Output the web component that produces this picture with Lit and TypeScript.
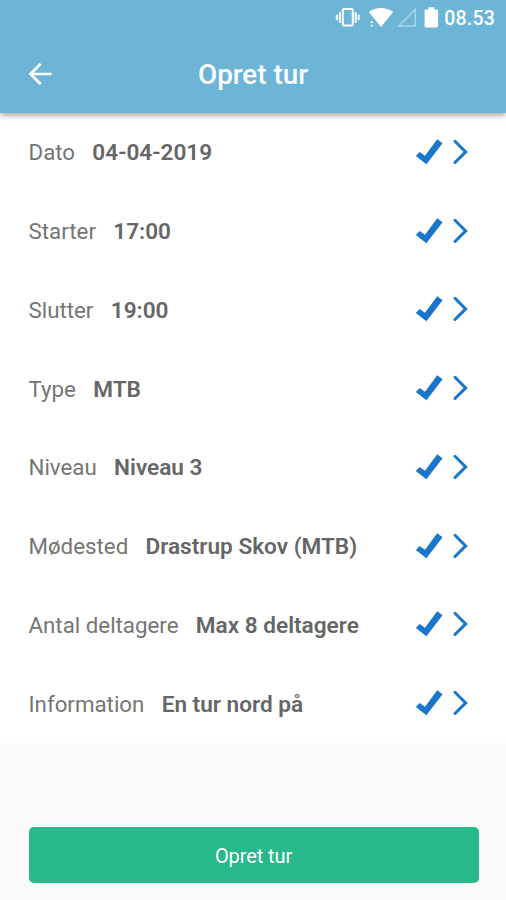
import { LitElement, html, css } from "lit";
import { customElement, property } from "lit/decorators.js";

@customElement("status-bar")
class StatusBar extends LitElement {
  static styles = css`
    :host { display: flex; height: 36px; box-sizing: border-box; justify-content: flex-end; align-items: center; gap: 4px; padding-right: 11px; color: #fff; }
    .icons { display: block; width: 106px; height: 36px; }
    .time { font-size: 19.5px; font-weight: 500; letter-spacing: 0.2px; line-height: 36px; padding-top: 1px; white-space: nowrap; }
  `;
  render() {
    return html`
      <svg class="icons" viewBox="335 0 106 36" fill="#fff">
        <rect x="343.8" y="9" width="10" height="16.5" rx="1.2" fill="none" stroke="#fff" stroke-width="2" />
        <path d="M339.8 12.3h2.2v10.4h-2.2zM336.8 14.7h2.2v5.6h-2.2zM355.6 12.3h2.2v10.4h-2.2zM358.6 14.7h2.2v5.6h-2.2z" opacity=".88" />
        <path d="M369.8 12C376.8 6.7 387.2 6.7 394.2 12L382 27Z" />
        <path d="M371.5 21.3h2.6v1.8h-2.6zM371.5 24.8h2.6v1.8h-2.6z" opacity=".8" />
        <path d="M416.3 9.5V26H399.6Z" fill="none" stroke="#fff" stroke-width="1.5" opacity=".42" />
        <path d="M426.9 9.4h2.6V7.2h5.8v2.2h2.5q1.3 0 1.3 1.3v15.4q0 1.4-1.3 1.4h-10.9q-1.3 0-1.3-1.4V10.7q0-1.3 1.3-1.3z" />
      </svg>
      <span class="time">08.53</span>
    `;
  }
}

@customElement("app-header")
class AppHeader extends LitElement {
  static styles = css`
    :host { display: block; height: 112.5px; background: #6cb5d7; color: #fff; box-shadow: 0 2px 6px rgba(60, 30, 30, 0.45); }
    .bar { display: grid; grid-template-columns: 68px 1fr 68px; align-items: center; height: 76px; }
    .back { display: block; width: 24px; height: 24px; margin-left: 28px; }
    .title { margin: 0; padding-top: 2px; text-align: center; font-size: 27.8px; font-weight: 500; line-height: 36px; }
  `;
  render() {
    return html`
      <status-bar></status-bar>
      <div class="bar">
        <svg class="back" viewBox="0 0 24 24" fill="none" stroke="#fff" stroke-width="2.7">
          <path d="M12.7 1.8 2.5 12l10.2 10.2M2.5 12H23.5" />
        </svg>
        <h1 class="title">Opret tur</h1>
      </div>
    `;
  }
}

@customElement("trip-field")
class TripField extends LitElement {
  @property() label = "";
  @property() value = "";
  static styles = css`
    :host { display: flex; align-items: center; height: 78.75px; box-sizing: border-box; padding: 0 37px 0 28.5px; font-size: 22.6px; line-height: 30px; white-space: nowrap; }
    .text { flex: 1; display: flex; align-items: baseline; gap: 17.3px; padding-top: 2px; }
    .label { color: #757575; font-weight: 400; font-size: 22.3px; }
    .value { color: #666; font-weight: 600; }
    .marks { display: block; width: 54px; height: 30px; }
  `;
  render() {
    return html`
      <div class="text">
        <span class="label">${this.label}</span>
        <span class="value">${this.value}</span>
      </div>
      <svg class="marks" viewBox="0 0 54 30">
        <path d="M.8 19.1 4.6 14.9 10 18.7 22.2 2.3 27.6 6.2 11.4 27.3Z" fill="#1976ca" />
        <path d="M40 4.3 50.7 14.9 40 25.5" fill="none" stroke="#1976ca" stroke-width="3" stroke-linecap="round" />
      </svg>
    `;
  }
}

@customElement("app-root")
class AppRoot extends LitElement {
  static styles = css`
    :host { display: flex; flex-direction: column; height: 900px; background: #fafafa; font-family: Roboto, "Liberation Sans", sans-serif; overflow: hidden; }
    app-header { position: relative; z-index: 1; }
    .fields { background: #fff; }
    .create { display: block; box-sizing: border-box; margin: auto 27.5px 17px 28.5px; height: 56px; border: 0; border-radius: 5px; padding: 3px 0 0; background: #27b88b; color: #fff; font-family: inherit; font-size: 20px; letter-spacing: -0.1px; line-height: 53px; }
  `;
  private fields = [
    ["Dato", "04-04-2019"],
    ["Starter", "17:00"],
    ["Slutter", "19:00"],
    ["Type", "MTB"],
    ["Niveau", "Niveau 3"],
    ["Mødested", "Drastrup Skov (MTB)"],
    ["Antal deltagere", "Max 8 deltagere"],
    ["Information", "En tur nord på"],
  ];
  render() {
    return html`
      <app-header></app-header>
      <div class="fields">
        ${this.fields.map(([label, value]) => html`<trip-field .label=${label} .value=${value}></trip-field>`)}
      </div>
      <button class="create">Opret tur</button>
    `;
  }
}
